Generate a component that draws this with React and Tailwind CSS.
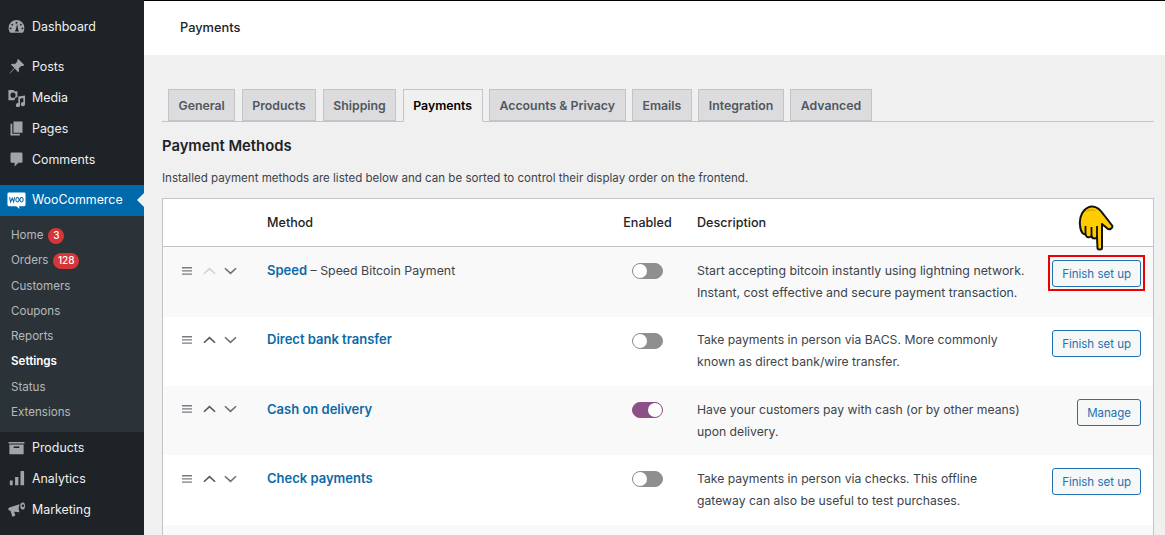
import React from "react";

const Ic = ({ children, vb = "0 0 20 20", cls = "w-5 h-5" }) => (
  <svg viewBox={vb} className={cls} fill="currentColor">{children}</svg>
);

const icons = {
  Dashboard: <path d="M10 3.200a8.300 8.300 0 0 0-8.300 8.300c0 1.900.6 3.600 1.700 5h13.200a8.300 8.300 0 0 0 1.700-5A8.300 8.300 0 0 0 10 3.200zM10 5a1 1 0 1 1 0 2 1 1 0 0 1 0-2zM5.500 7a1 1 0 1 1 0 2 1 1 0 0 1 0-2zM14.500 7a1 1 0 1 1 0 2 1 1 0 0 1 0-2zM3.800 11a1 1 0 1 1 0 2 1 1 0 0 1 0-2zM16.200 11a1 1 0 1 1 0 2 1 1 0 0 1 0-2zM8.600 15.300c-.2-1 .2-1.600.8-2.100L10.600 7l1.200 6.300c.5.5.8 1.100.6 2z" fillRule="evenodd" />,
  Posts: <path d="M11.800 2l6.500 6.500-1.500 1.100c-.7-.3-1.300-.3-1.800 0l-2.700 2.600c.6 1.300.5 2.900-.4 4.100L8.200 12l-3.800 4.100-2.400 2 2-2.500L7.800 11.700 4 8c1.200-.9 2.800-1 4.100-.4l2.600-2.700c.3-.5.3-1.100 0-1.800z" />,
  Media: <path d="M1.500 2h5.500l1 1.500h3v6a4 4 0 0 0-3.200 3.500H1.500zM6.300 4.800a2.700 2.700 0 1 0 0 5.400 2.700 2.700 0 0 0 0-5.400zM19 8v9a2.200 2.200 0 1 1-1.800-2.100V10.500l-3.500.8V18a2.200 2.200 0 1 1-1.800-2.100V9z" fillRule="evenodd" />,
  Pages: <path d="M6.800 2.600h9.500v12H6.800zM3.700 5h1.900v10.500H13.500v1.900H3.700z" />,
  Comments: <path d="M5 2.600h10a1.300 1.300 0 0 1 1.300 1.300v8.300a1.300 1.300 0 0 1-1.300 1.300h-3L8 17.400v-3.900H5a1.300 1.300 0 0 1-1.300-1.300V3.900A1.300 1.300 0 0 1 5 2.600z" />,
  Products: <path d="M1.600 4.200h16.800v1.700H1.600zM2.500 6.800h15V17h-15zM7 9v1.500h6V9z" fillRule="evenodd" />,
  Analytics: <path d="M3 12h3v5H3zM8.500 8.500H12V17H8.500zM14.200 2H18v15h-3.800z" />,
  Marketing: <path d="M17 2.500a3.300 3.300 0 0 0-3 3.500c0 1.700.6 3.200 1.500 3.900 2.200.6 3.500-.9 3.500-3.700 0-2.200-.8-3.700-2-3.700zm-.2 2.300a1.300 1.300 0 1 1 0 2.600 1.300 1.300 0 0 1 0-2.600zM13.200 4.500 2.500 7.800c-.8.300-1.200 1-1.200 1.700s.4 1.300 1.200 1.500l1.200.3 1.900 6.200 3.200-1-1.300-4.200 5.800.7c-1.300-2.500-1.300-5.400-.1-8.500z" fillRule="evenodd" />,
};

const WooIcon = () => (
  <svg viewBox="0 0 20 20" className="w-[19px] h-[19px]">
    <path d="M2 1.500h16A1.500 1.500 0 0 1 19.500 3v11.500a1.500 1.500 0 0 1-1.500 1.500h-5.500l.8 3-3.500-3H2A1.500 1.500 0 0 1 .5 14.500V3A1.500 1.500 0 0 1 2 1.500z" fill="#fff" />
    <path d="M2.700 6.500l1.100 5 1.700-4 1.500 4 1-5M11 6.900a1.700 2.300 0 1 0 .01 0M15.300 6.900a1.700 2.300 0 1 0 .01 0" fill="none" stroke="#0a68aa" strokeWidth="1.100" />
  </svg>
);

const MenuItem = ({ label, active }) => (
  <div className={`relative flex items-center h-[31px] ${active ? "bg-[#0069aa] text-white" : "text-[#f0f0f1]"}`}>
    <span className={`w-[32px] flex justify-center ${active ? "" : "text-[#a0a5aa]"}`}>
      {active ? <WooIcon /> : <Ic cls="w-[19px] h-[19px]">{icons[label]}</Ic>}
    </span>
    <span className={`text-[12.4px] ${active ? "" : "pt-[1px]"}`}>{label}</span>
    {active && <span className="absolute right-0 top-[8px] border-y-[7.500px] border-r-[7.500px] border-y-transparent border-r-[#f0f0f1]" />}
  </div>
);

const SubItem = ({ label, badge, bold }) => (
  <div className={`h-[25.300px] flex items-center pl-[11px] text-[11.600px] ${bold ? "font-semibold text-white" : "text-[#b4b9be]"}`}>
    {label}
    {badge && (
      <span className="ml-[5px] h-[16px] min-w-[16px] px-[4.500px] rounded-full bg-[#d63638] text-white text-[10px] font-medium flex items-center justify-center">
        {badge}
      </span>
    )}
  </div>
);

const Sidebar = () => (
  <aside className="w-[144px] shrink-0 h-[535px] bg-[#1d2327] pt-[11px] overflow-hidden">
    <MenuItem label="Dashboard" />
    <div className="h-[9px]" />
    <MenuItem label="Posts" />
    <MenuItem label="Media" />
    <MenuItem label="Pages" />
    <MenuItem label="Comments" />
    <div className="h-[10px]" />
    <MenuItem label="WooCommerce" active />
    <div className="bg-[#2c3338] pt-[7px] pb-[6.600px]">
      <SubItem label="Home" badge="3" />
      <SubItem label="Orders" badge="128" />
      <SubItem label="Customers" />
      <SubItem label="Coupons" />
      <SubItem label="Reports" />
      <SubItem label="Settings" bold />
      <SubItem label="Status" />
      <SubItem label="Extensions" />
    </div>
    <MenuItem label="Products" />
    <MenuItem label="Analytics" />
    <MenuItem label="Marketing" />
  </aside>
);

const tabs = ["General", "Products", "Shipping", "Payments", "Accounts & Privacy", "Emails", "Integration", "Advanced"];

const Tabs = () => (
  <div className="flex gap-[6.500px] pl-[6px] h-[33px] border-b border-[#c3c4c7]">
    {tabs.map((t) => (
      <div
        key={t}
        className={`px-[9.500px] pt-[2px] border border-[#c3c4c7] text-[12.300px] font-semibold flex items-center ${
          t === "Payments"
            ? "h-[33px] bg-[#f0f0f1] border-b-[#f0f0f1] text-black"
            : "h-[32px] bg-[#dcdcde] text-[#50575e]"
        }`}
      >
        {t}
      </div>
    ))}
  </div>
);

const Chevron = ({ up, faint }) => (
  <svg viewBox="0 0 14 8" className={`w-[13px] h-[8px] ${faint ? "text-[#d0d2d4]" : up ? "text-[#50575e]" : "text-[#6b7175]"}`} fill="none" stroke="currentColor" strokeWidth="1.700">
    <path d={up ? "M1 7l6-5.500L13 7" : "M1 1l6 5.500L13 1"} />
  </svg>
);

const Sort = ({ first }) => (
  <div className="flex items-center pl-[19px] h-[16px]">
    <svg viewBox="0 0 10 8" className="w-[10px] h-[8px] text-[#787c82]" fill="currentColor">
      <path d="M0 0h10v1.400H0zM0 3.200h10v1.400H0zM0 6.400h10v1.400H0z" />
    </svg>
    <span className="ml-[11px]"><Chevron up faint={first} /></span>
    <span className="ml-[8px]"><Chevron /></span>
  </div>
);

const Toggle = ({ on }) => (
  <div className={`w-[31px] h-[16px] rounded-full border flex items-center ${on ? "bg-[#8c4f86] border-[#8c4f86] justify-end" : "bg-[#8f8f8f] border-[#8f8f8f] justify-start"}`}>
    <div className="w-[14px] h-[14px] rounded-full bg-white" />
  </div>
);

const Btn = ({ children }) => (
  <div className="h-[27px] px-[9px] pt-[2px] flex items-center border border-[#2271b1] rounded-[3px] bg-[#f6f7f7] text-[#2271b1] text-[11.500px] whitespace-nowrap">
    {children}
  </div>
);

const Hand = () => (
  <svg viewBox="0 0 36 46" className="absolute right-[27px] -top-[55px] w-[36px] h-[46px]">
    <path
      d="M2 20 C1 12 5 3 13 1.500 C19 .5 23 6 26 10 L34.500 21 C34.500 23 32 25 30 24 L24 19 L24 43 C24 45 19.500 45 19.500 43 L19 32 C18 34 14 34 13.500 31 C12 33 8 33 7.500 29 C6 30 2.500 28 2 20 Z"
      fill="#ffcc00"
      stroke="#111"
      strokeWidth="2"
      strokeLinejoin="round"
    />
    <path d="M7.500 29 L7.500 21 M13.500 31 L13.500 22 M19 32 L19 21" stroke="#111" strokeWidth="1.800" fill="none" />
    <path d="M6 8 C9 4 15 3 19 6 C14 5 9 6 6 8 Z" fill="#d9a300" />
  </svg>
);

const rows = [
  { name: "Speed", sub: " – Speed Bitcoin Payment", desc: ["Start accepting bitcoin instantly using lightning network.", "Instant, cost effective and secure payment transaction."], btn: "Finish set up", first: true, h: "h-[70px]", alt: true, marked: true },
  { name: "Direct bank transfer", desc: ["Take payments in person via BACS. More commonly", "known as direct bank/wire transfer."], btn: "Finish set up", h: "h-[69px]", tight: true },
  { name: "Cash on delivery", desc: ["Have your customers pay with cash (or by other means)", "upon delivery."], btn: "Manage", on: true, h: "h-[69px]", alt: true, lift: true },
  { name: "Check payments", desc: ["Take payments in person via checks. This offline", "gateway can also be useful to test purchases."], btn: "Finish set up", h: "h-[70px]" },
];

const Row = ({ r }) => (
  <div className={`flex ${r.h} pt-[15px] ${r.alt ? "bg-[#f9f9f9]" : "bg-white"} ${r.first ? "text-[12.350px]" : "text-[12.200px]"} text-[#3c434a]`}>
    <div className={`w-[104px] ${r.tight || r.lift ? "" : "pt-[1px]"}`}><Sort first={r.first} /></div>
    <div className={`w-[343px] leading-[18px] ${r.tight ? "-mt-[2px]" : "-mt-[1px]"}`}>
      <span className="font-semibold text-[13px] text-[#0b6aa8]">{r.name}</span>
      {r.sub}
    </div>
    <div className="w-[75px] flex justify-center pt-[1px]"><Toggle on={r.on} /></div>
    <div className="w-[12px]" />
    <div className={`w-[340px] leading-[22px] ${r.tight ? "-mt-[3px]" : "-mt-[2px]"}`}>
      {r.desc.map((d) => <div key={d}>{d}</div>)}
    </div>
    <div className="flex-1 flex justify-end pr-[12px] -mt-[2px]">
      <div className="relative h-[27px]">
        <Btn>{r.btn}</Btn>
        {r.marked && (
          <>
            <div className="absolute -left-[4px] -right-[4px] -top-[5px] -bottom-[4px] border-2 border-[#ee0000]" />
            <Hand />
          </>
        )}
      </div>
    </div>
  </div>
);

const Main = () => (
  <main className="flex-1 min-w-0 h-[535px] overflow-hidden bg-[#f0f0f1] border-t border-black">
    <div className="h-[54px] bg-white pl-[36px] flex items-center text-[12.800px] font-medium text-[#1d2327]">Payments</div>
    <div className="pl-[18px] pr-[11px] pt-[34px]">
      <Tabs />
      <h2 className="text-[14.800px] font-semibold text-[#1d2327] mt-[14px] leading-[20px]">Payment Methods</h2>
      <p className="text-[11.550px] text-[#3c434a] mt-[13px] leading-[18px]">
        Installed payment methods are listed below and can be sorted to control their display order on the frontend.
      </p>
      <div className="mt-[11px] border border-[#c3c4c7] bg-white">
        <div className="flex h-[48px] pt-[2px] items-center border-b border-[#c3c4c7] text-[12.600px] font-medium text-[#1d2327] bg-white">
          <div className="w-[104px]" />
          <div className="w-[343px]">Method</div>
          <div className="w-[75px] text-center">Enabled</div>
          <div className="w-[12px]" />
          <div>Description</div>
        </div>
        {rows.map((r) => <Row key={r.name} r={r} />)}
        <div className="h-[60px] bg-[#f9f9f9]" />
      </div>
    </div>
  </main>
);

export default function App() {
  return (
    <div className="flex w-[1165px] h-[535px] overflow-hidden font-['Inter','Liberation_Sans',sans-serif]">
      <Sidebar />
      <Main />
    </div>
  );
}
